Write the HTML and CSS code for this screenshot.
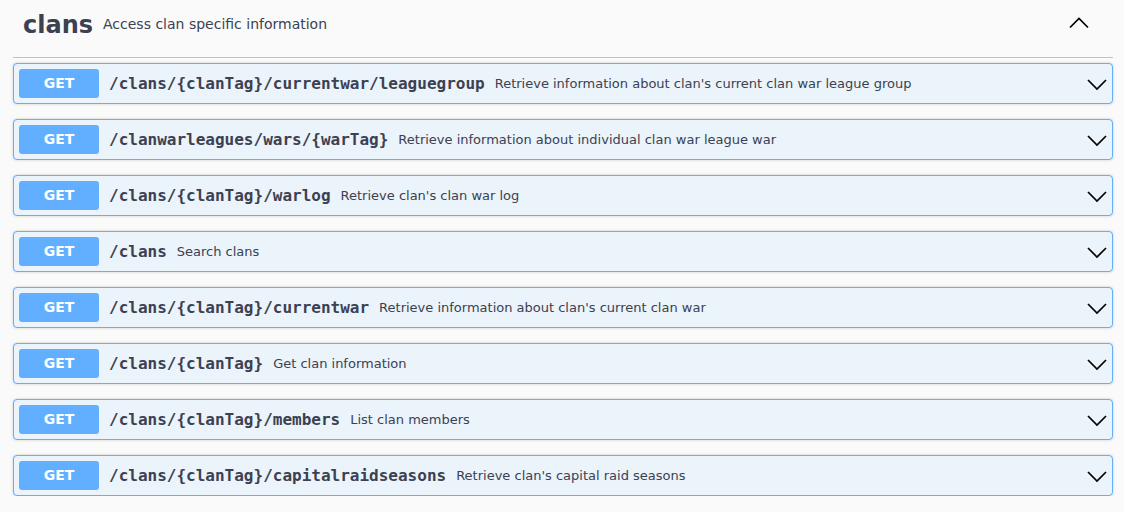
FILE: index.html
```html
<!DOCTYPE html>
<html>
<head>
<meta charset="utf-8">
<link rel="stylesheet" href="styles.css">
</head>
<body>
<div class="tag">
  <div class="tag-header">
    <h3 class="tag-name">clans</h3>
    <span class="tag-desc">Access clan specific information</span>
    <svg class="tag-arrow" width="20" height="20" viewBox="0 0 20 20"><polyline points="1,14.5 10,5.5 19,14.5" fill="none" stroke="#000" stroke-width="1.7"/></svg>
  </div>
  <div class="ops">
    <div class="op"><span class="method">GET</span><span class="path">/clans/{clanTag}/currentwar/leaguegroup</span><span class="desc">Retrieve information about clan's current clan war league group</span><svg class="arrow" width="20" height="20" viewBox="0 0 20 20"><polyline points="1,6 10,15 19,6" fill="none" stroke="#000" stroke-width="1.7"/></svg></div>
    <div class="op"><span class="method">GET</span><span class="path">/clanwarleagues/wars/{warTag}</span><span class="desc">Retrieve information about individual clan war league war</span><svg class="arrow" width="20" height="20" viewBox="0 0 20 20"><polyline points="1,6 10,15 19,6" fill="none" stroke="#000" stroke-width="1.7"/></svg></div>
    <div class="op"><span class="method">GET</span><span class="path">/clans/{clanTag}/warlog</span><span class="desc">Retrieve clan's clan war log</span><svg class="arrow" width="20" height="20" viewBox="0 0 20 20"><polyline points="1,6 10,15 19,6" fill="none" stroke="#000" stroke-width="1.7"/></svg></div>
    <div class="op"><span class="method">GET</span><span class="path">/clans</span><span class="desc">Search clans</span><svg class="arrow" width="20" height="20" viewBox="0 0 20 20"><polyline points="1,6 10,15 19,6" fill="none" stroke="#000" stroke-width="1.7"/></svg></div>
    <div class="op"><span class="method">GET</span><span class="path">/clans/{clanTag}/currentwar</span><span class="desc">Retrieve information about clan's current clan war</span><svg class="arrow" width="20" height="20" viewBox="0 0 20 20"><polyline points="1,6 10,15 19,6" fill="none" stroke="#000" stroke-width="1.7"/></svg></div>
    <div class="op"><span class="method">GET</span><span class="path">/clans/{clanTag}</span><span class="desc">Get clan information</span><svg class="arrow" width="20" height="20" viewBox="0 0 20 20"><polyline points="1,6 10,15 19,6" fill="none" stroke="#000" stroke-width="1.7"/></svg></div>
    <div class="op"><span class="method">GET</span><span class="path">/clans/{clanTag}/members</span><span class="desc">List clan members</span><svg class="arrow" width="20" height="20" viewBox="0 0 20 20"><polyline points="1,6 10,15 19,6" fill="none" stroke="#000" stroke-width="1.7"/></svg></div>
    <div class="op"><span class="method">GET</span><span class="path">/clans/{clanTag}/capitalraidseasons</span><span class="desc">Retrieve clan's capital raid seasons</span><svg class="arrow" width="20" height="20" viewBox="0 0 20 20"><polyline points="1,6 10,15 19,6" fill="none" stroke="#000" stroke-width="1.7"/></svg></div>
  </div>
</div>
</body>
</html>
```

FILE: styles.css
```css
html, body {
  margin: 0;
  padding: 0;
  background: #fafafa;
  font-family: "DejaVu Sans", sans-serif;
  color: #3b4151;
}
.tag {
  width: 1100px;
  margin-left: 13px;
}
.tag-header {
  display: flex;
  align-items: center;
  height: 48px;
  padding: 0 20px 9px 10px;
  border-bottom: 1px solid rgba(59, 65, 81, 0.3);
  margin-bottom: 5px;
}
.tag-name {
  margin: 2px 0 0;
  font-size: 24px;
  font-weight: bold;
  line-height: 30px;
}
.tag-desc {
  font-size: 14px;
  padding: 0 10px;
  flex: 1;
}
.tag-arrow {
  margin-right: 4px;
  margin-top: -2px;
}
.ops {
  display: flex;
  flex-direction: column;
  gap: 15px;
}
.op {
  display: flex;
  align-items: center;
  padding: 5px;
  border: 1px solid #61affe;
  border-radius: 4px;
  background: #ebf3fb;
  box-shadow: 0 0 3px rgba(0, 0, 0, 0.19);
}
.method {
  min-width: 80px;
  padding: 6px 0;
  border-radius: 3px;
  background: #61affe;
  color: #fff;
  font-size: 14px;
  font-weight: bold;
  text-align: center;
  line-height: 17px;
}
.path {
  font-family: "DejaVu Sans Mono", monospace;
  font-weight: bold;
  font-size: 16px;
  padding: 0 10px;
}
.desc {
  font-size: 13px;
  flex: 1;
}
```
